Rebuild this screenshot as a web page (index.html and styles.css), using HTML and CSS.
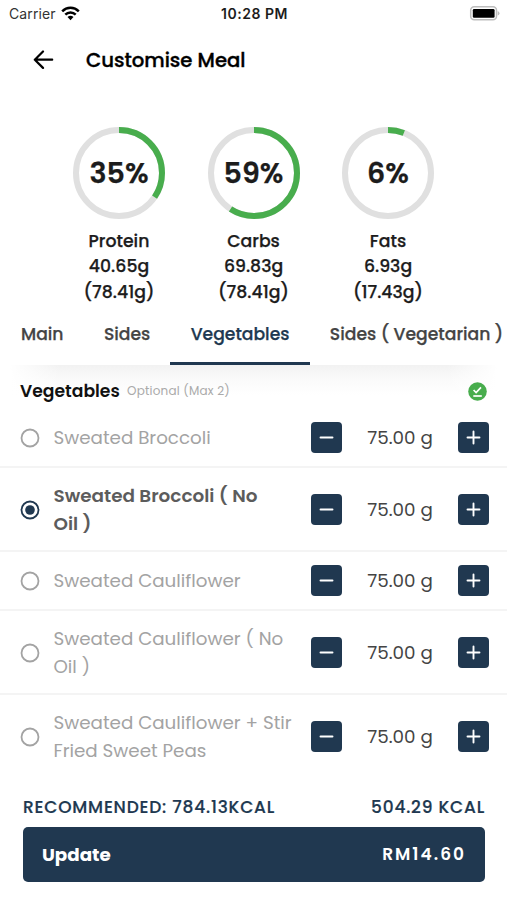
FILE: index.html
```html
<!DOCTYPE html>
<html lang="en">
<head>
<meta charset="utf-8">
<title>Customise Meal</title>
<link rel="stylesheet" href="styles.css">
</head>
<body>
<svg class="defs" width="0" height="0">
  <symbol id="radio" viewBox="0 0 20 20"><circle cx="10" cy="10" r="8.5" fill="none" stroke="currentColor" stroke-width="1.8"/></symbol>
  <symbol id="radio-on" viewBox="0 0 20 20"><circle cx="10" cy="10" r="8.5" fill="none" stroke="currentColor" stroke-width="1.8"/><circle cx="10" cy="10" r="4.8" fill="currentColor"/></symbol>
  <symbol id="minus" viewBox="0 0 31 31"><path d="M9.500 15.500h12" stroke="currentColor" stroke-width="1.900" stroke-linecap="round"/></symbol>
  <symbol id="plus" viewBox="0 0 31 31"><path d="M9.500 15.500h12M15.500 9.500v12" stroke="currentColor" stroke-width="1.900" stroke-linecap="round"/></symbol>
</svg>
<header class="status">
  <div class="carrier"><span>Carrier</span>
    <svg width="19" height="15" viewBox="0 0 19 15"><g fill="none" stroke="#000" stroke-width="2.5"><path d="M1.200 5.300a11.700 11.700 0 0 1 16.600 0"/><path d="M4.300 8.600a7.300 7.300 0 0 1 10.400 0"/></g><path d="M9.500 14.200 6.500 11.100a4.300 4.300 0 0 1 6 0z"/></svg>
  </div>
  <span class="clock">10:28 PM</span>
  <svg class="battery" width="31" height="15" viewBox="0 0 31 15"><rect x="1.700" y=".8" width="25.800" height="13" rx="3.500" fill="#fff" stroke="#bdbdbd" stroke-width="1.500"/><rect x="3.800" y="2.900" width="21.800" height="8.800" rx="1.300"/><path d="M28.700 5v4.600q1.800-.7 1.800-2.300T28.700 5z" fill="#bdbdbd"/></svg>
</header>
<nav class="titlebar">
  <svg width="22" height="20" viewBox="0 0 22 20"><path d="M10 1.500 1.800 9.700l8.200 8.200M1.800 9.700h17.400" fill="none" stroke="#000" stroke-width="2.200" stroke-linecap="round" stroke-linejoin="round"/></svg>
  <h1>Customise Meal</h1>
</nav>
<section class="macros">
  <div class="macro">
    <div class="ring"><svg viewBox="0 0 92 92"><circle class="track" cx="46" cy="46" r="43"/><circle class="value" cx="46" cy="46" r="43" pathLength="100" stroke-dasharray="34.500 100"/></svg><b>35%</b></div>
    <p class="name">Protein</p><p>40.65g</p><p class="goal">(78.41g)</p>
  </div>
  <div class="macro">
    <div class="ring"><svg viewBox="0 0 92 92"><circle class="track" cx="46" cy="46" r="43"/><circle class="value" cx="46" cy="46" r="43" pathLength="100" stroke-dasharray="59.200 100"/></svg><b>59%</b></div>
    <p class="name">Carbs</p><p>69.83g</p><p class="goal">(78.41g)</p>
  </div>
  <div class="macro">
    <div class="ring"><svg viewBox="0 0 92 92"><circle class="track" cx="46" cy="46" r="43"/><circle class="value" cx="46" cy="46" r="43" pathLength="100" stroke-dasharray="6 100"/></svg><b>6%</b></div>
    <p class="name">Fats</p><p>6.93g</p><p class="goal">(17.43g)</p>
  </div>
</section>
<nav class="tabs">
  <a>Main</a><a>Sides</a><a class="active">Vegetables</a><a class="wide">Sides ( Vegetarian )</a>
</nav>
<main>
  <div class="group">
    <h2>Vegetables</h2><span class="hint">Optional (Max 2)</span>
    <svg width="19" height="19" viewBox="0 0 19 19"><circle cx="9.500" cy="9.500" r="9.300" fill="#48ad4d"/><path d="m5.600 8 2.500 2.500L13 5.300" fill="none" stroke="#fff" stroke-width="1.700"/><path d="M5.300 14h8.500" stroke="#fff" stroke-width="1.700"/></svg>
  </div>
  <ul class="options">
    <li><svg class="radio"><use href="#radio"/></svg><span class="label">Sweated Broccoli</span><svg class="step"><use href="#minus"/></svg><span class="qty">75.00 g</span><svg class="step"><use href="#plus"/></svg></li>
    <li class="selected"><svg class="radio"><use href="#radio-on"/></svg><span class="label">Sweated Broccoli ( No<br>Oil )</span><svg class="step"><use href="#minus"/></svg><span class="qty">75.00 g</span><svg class="step"><use href="#plus"/></svg></li>
    <li><svg class="radio"><use href="#radio"/></svg><span class="label">Sweated Cauliflower</span><svg class="step"><use href="#minus"/></svg><span class="qty">75.00 g</span><svg class="step"><use href="#plus"/></svg></li>
    <li><svg class="radio"><use href="#radio"/></svg><span class="label">Sweated Cauliflower ( No<br>Oil )</span><svg class="step"><use href="#minus"/></svg><span class="qty">75.00 g</span><svg class="step"><use href="#plus"/></svg></li>
    <li><svg class="radio"><use href="#radio"/></svg><span class="label">Sweated Cauliflower + Stir<br>Fried Sweet Peas</span><svg class="step"><use href="#minus"/></svg><span class="qty">75.00 g</span><svg class="step"><use href="#plus"/></svg></li>
  </ul>
</main>
<footer>
  <div class="energy"><span class="rec">RECOMMENDED: 784.13KCAL</span><span class="cur">504.29 KCAL</span></div>
  <button class="update"><span>Update</span><span class="price">RM14.60</span></button>
</footer>
</body>
</html>
```
FILE: styles.css
```css
* { box-sizing: border-box; margin: 0; padding: 0; }
body { width: 507px; height: 900px; overflow: hidden; background: #fff; color: #1c1c1c; font-family: Poppins, Inter, sans-serif; }
.defs { position: absolute; }
svg { display: block; flex: none; }
span, a, b, h1, h2 { white-space: nowrap; }

.status { display: grid; grid-template-columns: 1fr auto 1fr; align-items: center; height: 27px; padding: 0 7px 0 9px; font-family: Inter, sans-serif; font-size: 14px; }
.carrier { display: flex; align-items: center; gap: 5px; color: #333; letter-spacing: .1px; }
.clock { font-weight: 600; font-size: 14px; letter-spacing: .5px; }
.battery { justify-self: end; }

.titlebar { display: flex; align-items: center; gap: 31px; height: 66px; padding-left: 33px; }
h1 { font-size: 19.650px; font-weight: 500; color: #000; -webkit-text-stroke: .35px; }

.macros { display: flex; justify-content: center; gap: 42.500px; padding-top: 34px; height: 211px; }
.macro { width: 92px; text-align: center; font-size: 17.300px; font-weight: 500; line-height: 25.600px; white-space: nowrap; -webkit-text-stroke: .25px; }
.ring { display: grid; place-items: center; width: 92px; height: 92px; margin-bottom: 9.500px; }
.ring > * { grid-area: 1 / 1; }
.ring svg { width: 92px; height: 92px; transform: rotate(-90deg); }
.ring circle { fill: none; stroke-width: 6; }
.track { stroke: #e0e0e0; }
.value { stroke: #48ad4d; }
.ring b { z-index: 1; font-size: 28.500px; font-weight: 600; line-height: 36px; }

.tabs { display: flex; height: 61px; padding-left: 1px; overflow: hidden; color: #444; font-size: 17.200px; font-weight: 500; line-height: 61px; -webkit-text-stroke: .25px; }
.tabs a { padding: 0 20.200px; }
.tabs a:first-child { padding-left: 20px; }
.tabs .active { color: #203850; border-bottom: 3px solid #203850; }

main { background: linear-gradient(90deg, #fff 10px, transparent 60px, transparent 447px, #fff 497px) 0 0 / 100% 30px no-repeat, linear-gradient(#f2f2f2, #fafafa 14px, #fff 30px) 0 0 / 100% 30px no-repeat; }
.group { display: flex; align-items: center; height: 44px; padding: 8px 20px 0; }
h2 { width: 107px; font-size: 17.200px; font-weight: 600; color: #111; }
.hint { font-size: 12px; color: #aaa; letter-spacing: .2px; }
.group svg { margin-left: auto; }

.options { list-style: none; }
.options li { display: flex; align-items: center; height: 84.200px; padding: 1px 18px 0 20px; border-bottom: 2px solid #f4f4f4; font-size: 18.300px; line-height: 28px; color: #a3a3a3; }
.options li:nth-child(1), .options li:nth-child(3) { height: 59px; }
.options li:last-child { border-bottom: 0; height: 84px; padding-top: 0; }
.radio { width: 20px; height: 20px; margin-right: 13.500px; }
.label { width: 257.500px; }
.selected .radio { color: #203850; }
.selected .label { color: #5c5c5c; font-size: 18.400px; font-weight: 600; }
.step { width: 31px; height: 31px; margin-bottom: 1px; border-radius: 4px; background: #203850; color: #fff; }
.qty { flex: 1; text-align: center; color: #444; }

footer { padding: 13.600px 22px 0 23px; }
.energy { display: flex; justify-content: space-between; height: 34px; font-size: 17px; font-weight: 500; line-height: 28px; color: #203850; letter-spacing: .8px; -webkit-text-stroke: .2px; }
.update { display: flex; align-items: center; justify-content: space-between; width: 462px; height: 55px; padding: 0 19px; border: 0; border-radius: 5px; background: #203850; color: #fff; font-family: inherit; font-size: 18.250px; font-weight: 700; }
.price { font-size: 17px; font-weight: 600; letter-spacing: 2px; }
```
